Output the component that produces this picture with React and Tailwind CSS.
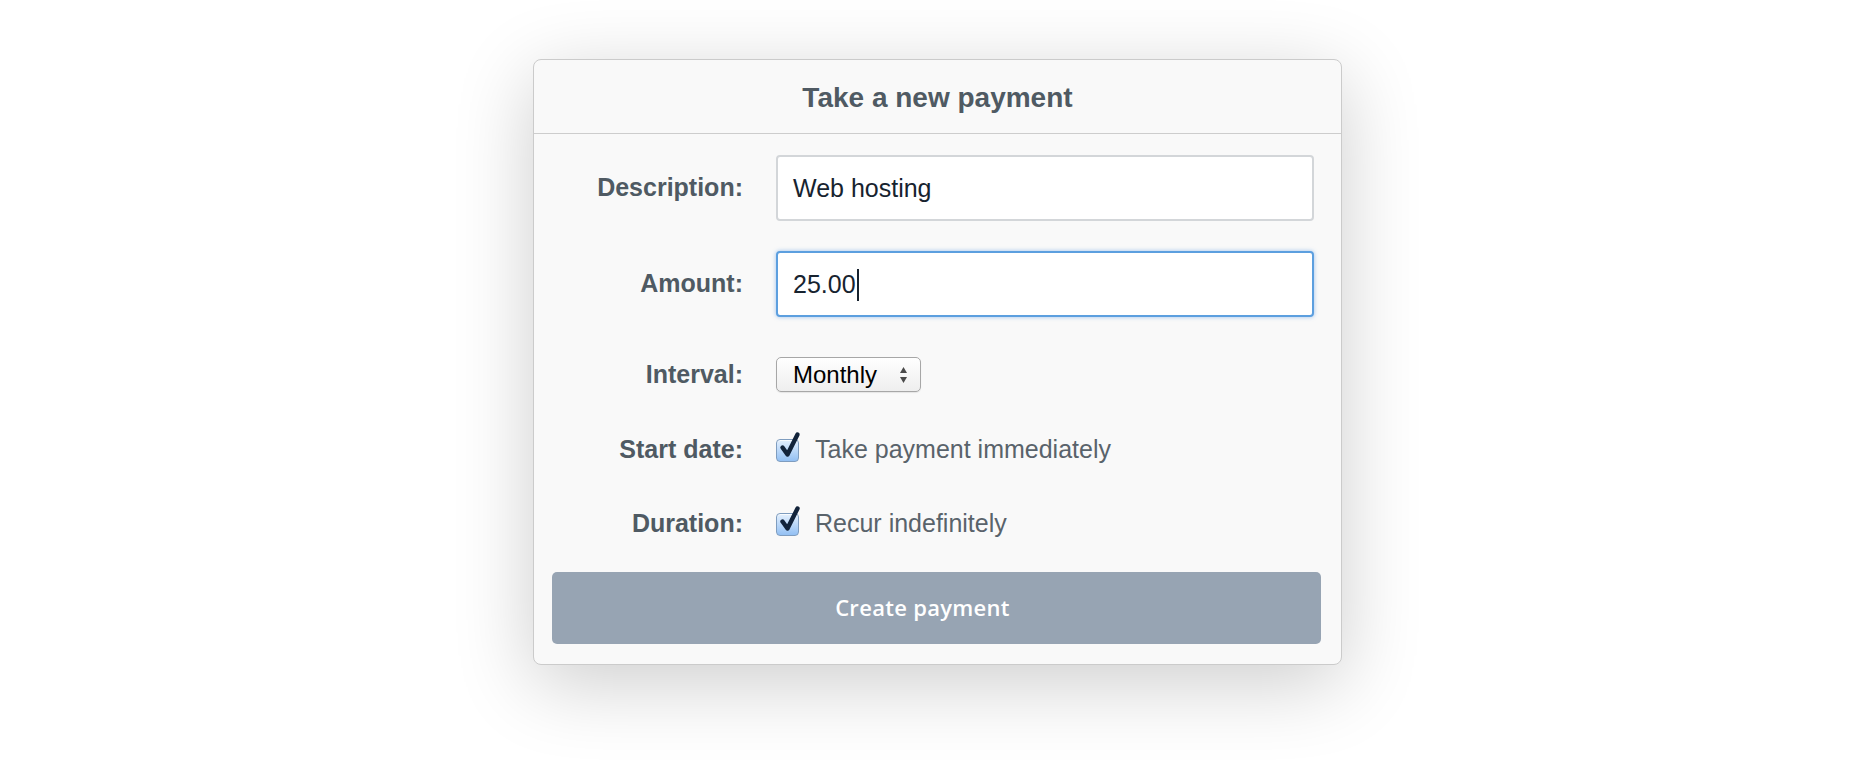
import React from 'react';

// One row of the payment form: bold label on the left, control on the right.
function Row({ label, className, children }) {
  return (
    <div className={`flex items-center ${className}`}>
      <div className="w-[209px] shrink-0 text-right text-[25px] font-bold text-[#4f5a63]">{label}</div>
      <div className="ml-[33px] w-[538px] flex items-center">{children}</div>
    </div>
  );
}

function Checkbox() {
  return (
    <span className="relative inline-block w-[23px] h-[23px] shrink-0 rounded-[4px] border border-[#7f9dbf] bg-gradient-to-b from-[#e4f0fd] to-[#93c0f3] shadow-[inset_0_1px_0_rgba(255,255,255,0.8)]">
      <svg className="absolute left-[2px] top-[-8px] overflow-visible" width="22" height="28" viewBox="0 0 22 28">
        <path d="M3.5 15.5 L8.5 22.5 L18.5 2.5" fill="none" stroke="#12233a" strokeWidth="4.4" strokeLinecap="round" strokeLinejoin="round" />
      </svg>
    </span>
  );
}

export default function App() {
  return (
    <div className="min-h-[762px] bg-white flex justify-center pt-[59px] font-['Liberation_Sans',Arial,sans-serif]">
      <div className="w-[809px] h-[606px] mr-[1px] rounded-[8px] border border-[#cbcbcb] bg-[#f9f9f9] shadow-[0_18px_80px_rgba(0,0,0,0.2)] flex flex-col">
        <div className="h-[74px] shrink-0 flex items-center justify-center pt-[2px] border-b border-[#cdcdcd] text-[28px] font-bold text-[#4f5a63]">
          Take a new payment
        </div>

        <Row label="Description:" className="mt-[21px] h-[66px]">
          <div className="w-full h-[66px] flex items-center rounded-[4px] border-2 border-[#d3d6d9] bg-white pl-[15px] pt-[1px] text-[25px] text-[#17232f]">
            Web hosting
          </div>
        </Row>

        <Row label="Amount:" className="mt-[30px] h-[66px]">
          <div className="w-full h-[66px] flex items-center rounded-[4px] border-2 border-[#5c9fdf] bg-white pl-[15px] pt-[1px] text-[25px] text-[#17232f] shadow-[0_0_4px_rgba(80,150,225,0.55)]">
            25.00
            <span className="ml-[1px] w-[2px] h-[32px] bg-[#17232f]" />
          </div>
        </Row>

        <Row label="Interval:" className="mt-[40px] h-[35px]">
          <div className="w-[145px] h-[35px] flex items-center justify-between rounded-[5px] border border-[#a7a7a7] bg-gradient-to-b from-white to-[#eeeeee] pl-[16px] pr-[12px] text-[24px] text-black shadow-[0_1px_1px_rgba(0,0,0,0.08)]">
            <span>Monthly</span>
            <svg width="9" height="18" viewBox="0 0 9 18">
              <path d="M4.5 1 L8 7 L1 7 Z" fill="#4a4a4a" />
              <path d="M4.5 17 L8 11 L1 11 Z" fill="#4a4a4a" />
            </svg>
          </div>
        </Row>

        <Row label="Start date:" className="mt-[43px] h-[30px]">
          <Checkbox />
          <span className="ml-[16px] text-[25px] text-[#59636b]">Take payment immediately</span>
        </Row>

        <Row label="Duration:" className="mt-[44px] h-[30px]">
          <Checkbox />
          <span className="ml-[16px] text-[25px] text-[#59636b]">Recur indefinitely</span>
        </Row>

        <button className="mt-[33px] ml-[18px] mr-[20px] h-[72px] pr-[28px] pb-[1px] rounded-[5px] bg-[#97a4b3] text-white text-[22px] font-semibold tracking-[0.3px] font-['Open_Sans',sans-serif]">
          Create payment
        </button>
      </div>
    </div>
  );
}
